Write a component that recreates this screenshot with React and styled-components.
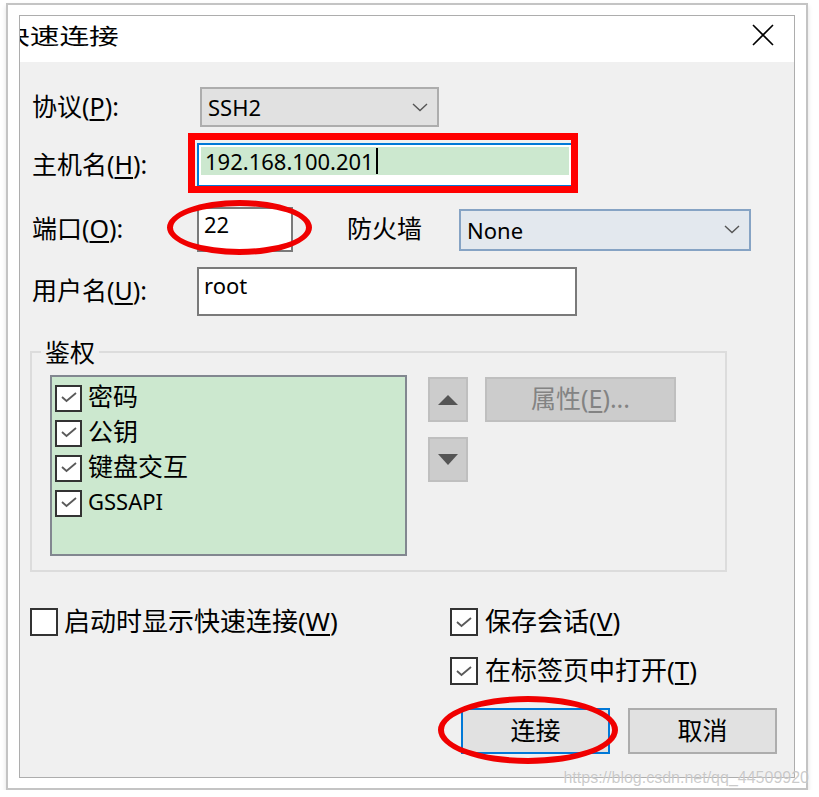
import React from "react";
import styled, { createGlobalStyle } from "styled-components";

const GlobalStyle = createGlobalStyle`
  html, body {
    margin: 0;
    padding: 0;
    background: #ffffff;
  }
  body {
    font-family: "Noto Sans", "Noto Sans CJK SC", sans-serif;
    color: #000;
  }
  * {
    box-sizing: border-box;
  }
`;

const Frame = styled.div`
  position: relative;
  width: 802px;
  height: 787px;
  margin: 3px 0 0 6px;
  padding: 10px 11px;
  border: 2px solid #c4c4c4;
  background: #fff;
  box-shadow: 0 3px 5px rgba(0, 0, 0, 0.12);
`;

const Dialog = styled.div`
  width: 776px;
  height: 763px;
  display: flex;
  flex-direction: column;
  border: 1px solid #adadad;
  background: #f0f0f0;
  overflow: hidden;
`;

const TitleBar = styled.div`
  height: 46px;
  flex: none;
  display: flex;
  justify-content: space-between;
  align-items: flex-start;
  background: #fff;
  overflow: hidden;
`;

const Title = styled.div`
  margin-left: -20px;
  font-size: 22px;
  line-height: 38px;
  white-space: nowrap;
  transform: scaleX(1.35);
  transform-origin: left center;
`;

const Close = styled.svg`
  margin: 8px 20px 0 0;
  flex: none;
`;

const Body = styled.div`
  flex: 1;
  padding: 25px 17px 0 10px;
`;

const Row = styled.div`
  display: flex;
  align-items: center;
  height: ${(p) => p.$h}px;
  margin-top: ${(p) => p.$mt || 0}px;
`;

const Label = styled.div`
  flex: none;
  width: ${(p) => p.$w || 167}px;
  margin-left: ${(p) => p.$ml || 0}px;
  padding: 0 0 3px 2px;
  font-size: 25px;
  line-height: 30px;
  white-space: nowrap;
  u {
    text-underline-offset: 3px;
  }
`;

const Combo = styled.div`
  display: flex;
  align-items: center;
  justify-content: space-between;
  width: ${(p) => p.$w}px;
  height: ${(p) => p.$h}px;
  margin-left: ${(p) => p.$ml || 0}px;
  padding: 0 9px 0 6px;
  border: 2px solid ${(p) => p.$border};
  background: ${(p) => p.$bg};
  font-size: 22px;
  line-height: 28px;
`;

const Field = styled.div`
  position: relative;
  width: ${(p) => p.$w}px;
  height: 100%;
  padding: ${(p) => p.$pt}px 5px 0;
  border: 2px solid #7a7a7a;
  background: #fff;
  font-size: 22px;
  line-height: 28px;
`;

const HostField = styled.div`
  position: relative;
  width: 376px;
  height: 100%;
  padding: 2px 2px 10px;
  border: 2px solid #0078d7;
  background: #fff;
`;

const Selection = styled.div`
  display: flex;
  align-items: center;
  height: 28px;
  padding-left: 4px;
  background: #cce8cf;
  font-size: 22px;
  line-height: 28px;
`;

const Caret = styled.span`
  display: inline-block;
  width: 2px;
  height: 26px;
  margin-left: 2px;
  background: #000;
`;

const RedBox = styled.div`
  position: absolute;
  top: -12px;
  left: -11px;
  right: -7px;
  bottom: -8px;
  border: 7px solid #ff0000;
  pointer-events: none;
`;

const RedRing = styled.div`
  position: absolute;
  top: ${(p) => p.$t}px;
  left: ${(p) => p.$l}px;
  right: ${(p) => p.$r}px;
  bottom: ${(p) => p.$b}px;
  border: 6px solid #f00000;
  border-radius: 50%;
  pointer-events: none;
`;

const Group = styled.fieldset`
  width: 697px;
  margin: 21px 0 0;
  padding: 8px 0 14px;
  border: 2px solid #dcdcdc;
  min-width: 0;
`;

const Legend = styled.legend`
  margin-left: 9px;
  padding: 0 4px;
  font-size: 25px;
  line-height: 30px;
`;

const GroupInner = styled.div`
  display: flex;
  align-items: flex-start;
  padding-left: 18px;
`;

const ListBox = styled.div`
  width: 357px;
  height: 181px;
  padding: 4px 0 0 3px;
  border: 2px solid #828790;
  background: #cce8cf;
`;

const ListItem = styled.div`
  display: flex;
  align-items: center;
  gap: 6px;
  height: 35px;
  font-size: ${(p) => (p.$latin ? 22 : 25)}px;
  line-height: 30px;
  span {
    padding-bottom: 5px;
  }
`;

const Box = styled.span`
  flex: none;
  display: flex;
  align-items: center;
  justify-content: center;
  width: ${(p) => p.$size}px;
  height: ${(p) => p.$size}px;
  border: 2px solid #333;
  background: #fff;
`;

const SideButtons = styled.div`
  display: grid;
  grid-template-columns: 40px 191px;
  grid-template-rows: 45px 45px;
  column-gap: 17px;
  row-gap: 15px;
  margin: 2px 0 0 21px;
`;

const FlatButton = styled.div`
  display: flex;
  align-items: center;
  justify-content: center;
  padding-bottom: ${(p) => (p.$text ? 3 : 0)}px;
  border: 2px solid #bfbfbf;
  background: #cccccc;
  color: #838383;
  font-size: 25px;
  line-height: 30px;
  u {
    text-underline-offset: 3px;
  }
`;

const Bottom = styled.div`
  display: grid;
  grid-template-columns: 420px 1fr;
  margin-top: 36px;
`;

const Column = styled.div`
  display: flex;
  flex-direction: column;
`;

const CheckRow = styled.div`
  display: flex;
  align-items: center;
  gap: ${(p) => p.$gap || 6}px;
  height: 28px;
  margin-top: ${(p) => p.$mt || 0}px;
  font-size: 26px;
  line-height: 30px;
  white-space: nowrap;
  span {
    padding-bottom: 3px;
  }
  u {
    text-underline-offset: 3px;
  }
`;

const ButtonRow = styled.div`
  display: flex;
  justify-content: flex-end;
  gap: 18px;
  margin-top: 23px;
`;

const Button = styled.div`
  position: relative;
  display: flex;
  align-items: center;
  justify-content: center;
  width: 149px;
  height: 46px;
  padding-bottom: 3px;
  border: 2px solid ${(p) => (p.$primary ? "#0078d7" : "#adadad")};
  background: #e1e1e1;
  font-size: 25px;
  line-height: 30px;
`;

const Watermark = styled.div`
  position: absolute;
  right: -3px;
  bottom: 1px;
  font-family: "Liberation Sans", Arial, sans-serif;
  font-size: 16px;
  line-height: 18px;
  color: rgba(150, 150, 150, 0.5);
  text-shadow: 0 0 1px rgba(255, 255, 255, 0.9);
  white-space: nowrap;
`;

const Chevron = () => (
  <svg width="16" height="9" viewBox="0 0 16 9">
    <path d="M1 1 L8 7.5 L15 1" fill="none" stroke="#555" strokeWidth="1.4" />
  </svg>
);

const Check = ({ size = 27, checked = true }) => (
  <Box $size={size}>
    {checked && (
      <svg width="20" height="20" viewBox="0 0 20 20">
        <path d="M3 11 L7.5 15 L17 7" fill="none" stroke="#5a5a5a" strokeWidth="1.8" />
      </svg>
    )}
  </Box>
);

const authItems = [
  { text: "密码" },
  { text: "公钥" },
  { text: "键盘交互" },
  { text: "GSSAPI", latin: true },
];

export default function App() {
  return (
    <>
      <GlobalStyle />
      <Frame>
        <Dialog>
          <TitleBar>
            <Title>快速连接</Title>
            <Close width="22" height="22" viewBox="0 0 22 22">
              <path d="M1 1 L21 21 M21 1 L1 21" stroke="#000" strokeWidth="1.6" />
            </Close>
          </TitleBar>

          <Body>
            <Row $h={40}>
              <Label>
                协议(<u>P</u>):
              </Label>
              <Combo $w={239} $h={40} $ml={3} $border="#adadad" $bg="#e1e1e1">
                SSH2
                <Chevron />
              </Combo>
            </Row>

            <Row $h={44} $mt={16}>
              <Label>
                主机名(<u>H</u>):
              </Label>
              <HostField>
                <Selection>
                  192.168.100.201
                  <Caret />
                </Selection>
                <RedBox />
              </HostField>
            </Row>

            <Row $h={45} $mt={20}>
              <Label>
                端口(<u>O</u>):
              </Label>
              <Field $w={96} $pt={1}>
                22
                <RedRing $t={-9} $l={-32} $r={-21} $b={-5} />
              </Field>
              <Label $w={114} $ml={52}>
                防火墙
              </Label>
              <Combo $w={292} $h={42} $border="#86a3c4" $bg="#e3e8ee">
                None
                <Chevron />
              </Combo>
            </Row>

            <Row $h={49} $mt={15}>
              <Label>
                用户名(<u>U</u>):
              </Label>
              <Field $w={380} $pt={2}>
                root
              </Field>
            </Row>

            <Group>
              <Legend>鉴权</Legend>
              <GroupInner>
                <ListBox>
                  {authItems.map((item) => (
                    <ListItem key={item.text} $latin={item.latin}>
                      <Check />
                      <span>{item.text}</span>
                    </ListItem>
                  ))}
                </ListBox>
                <SideButtons>
                  <FlatButton>
                    <svg width="20" height="10" viewBox="0 0 20 10">
                      <polygon points="0,10 10,0 20,10" fill="#555" />
                    </svg>
                  </FlatButton>
                  <FlatButton $text>
                    属性(<u>E</u>)...
                  </FlatButton>
                  <FlatButton>
                    <svg width="20" height="11" viewBox="0 0 20 11">
                      <polygon points="0,0 20,0 10,11" fill="#555" />
                    </svg>
                  </FlatButton>
                </SideButtons>
              </GroupInner>
            </Group>

            <Bottom>
              <Column>
                <CheckRow>
                  <Check size={28} checked={false} />
                  <span>
                    启动时显示快速连接(<u>W</u>)
                  </span>
                </CheckRow>
              </Column>
              <Column>
                <CheckRow $gap={7}>
                  <Check size={28} />
                  <span>
                    保存会话(<u>V</u>)
                  </span>
                </CheckRow>
                <CheckRow $gap={7} $mt={21}>
                  <Check size={28} />
                  <span>
                    在标签页中打开(<u>T</u>)
                  </span>
                </CheckRow>
                <ButtonRow>
                  <Button $primary>
                    连接
                    <RedRing $t={-14} $l={-25} $r={-10} $b={-12} />
                  </Button>
                  <Button>取消</Button>
                </ButtonRow>
              </Column>
            </Bottom>
          </Body>
        </Dialog>
        <Watermark>https://blog.csdn.net/qq_44509920</Watermark>
      </Frame>
    </>
  );
}
